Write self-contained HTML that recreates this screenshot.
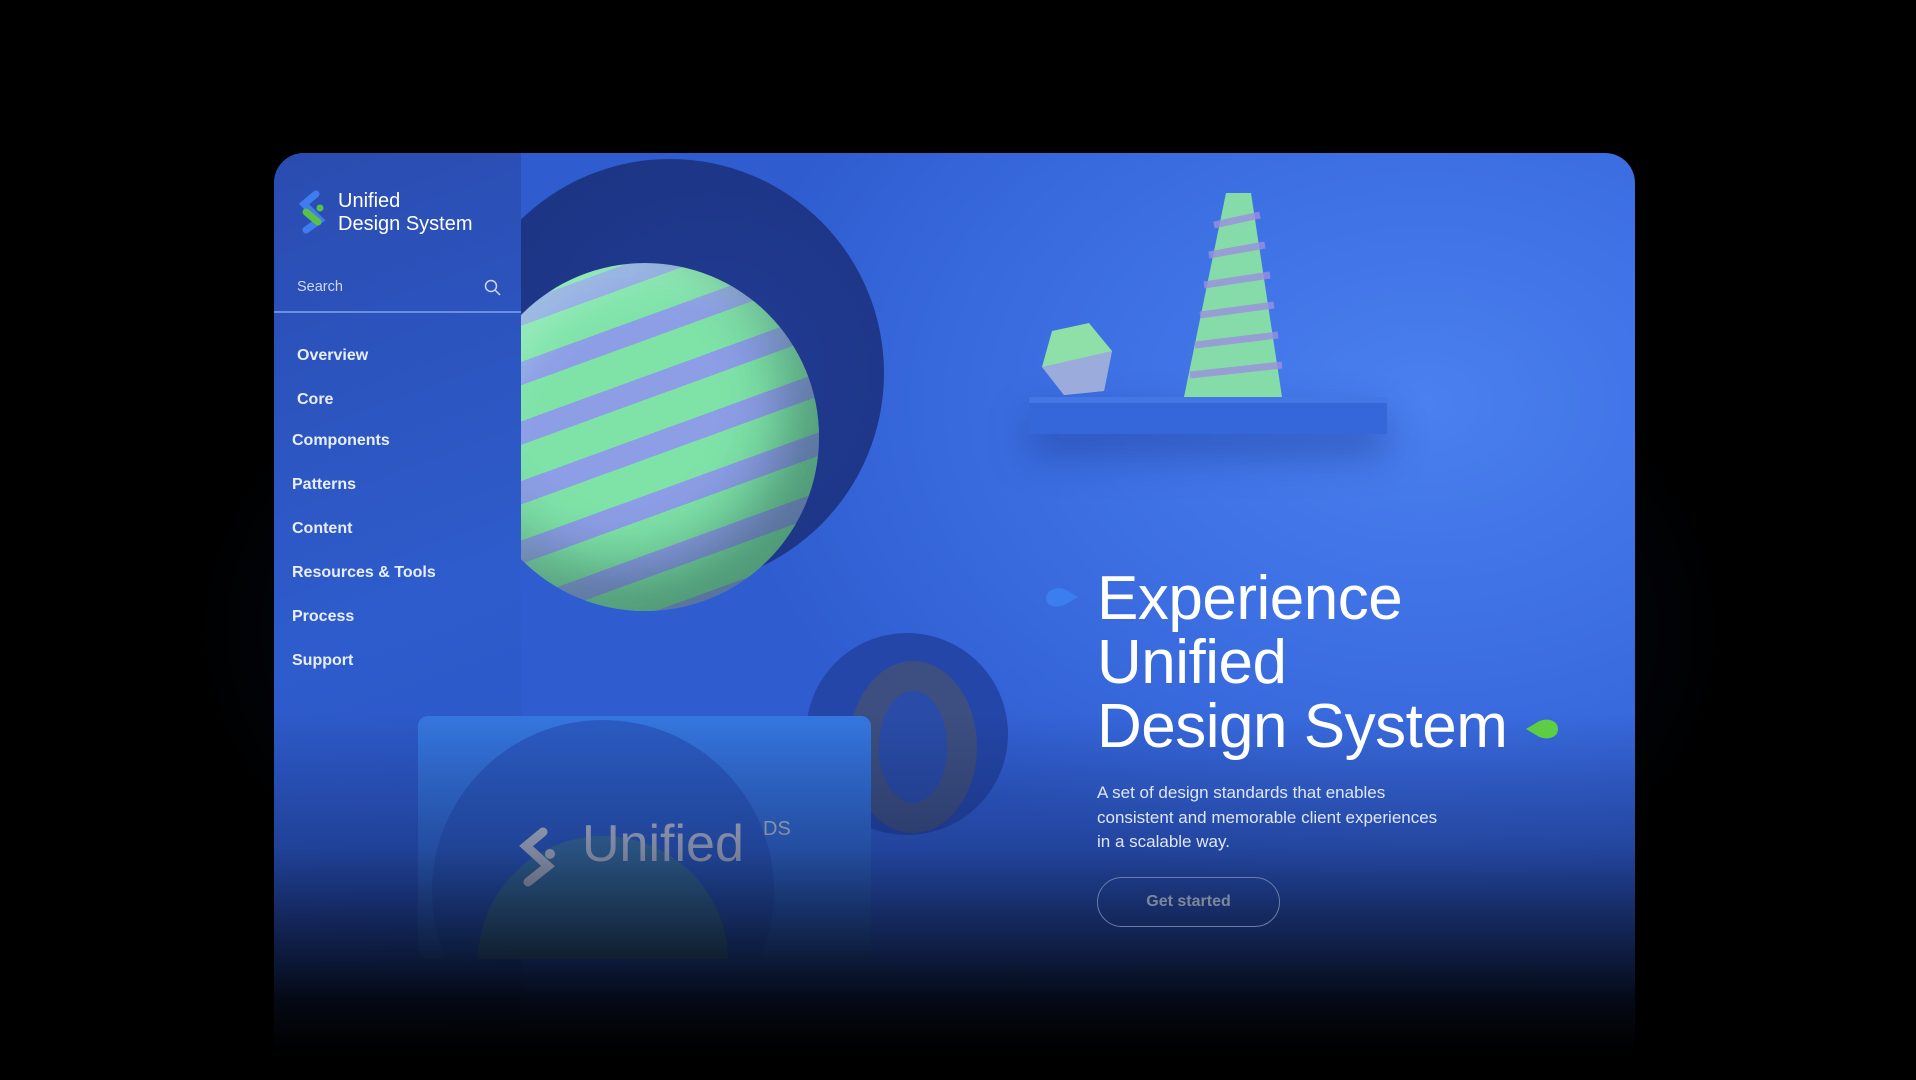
<!DOCTYPE html>
<html><head><meta charset="utf-8"><style>
*{margin:0;padding:0;box-sizing:border-box}
body{width:1916px;height:1009px;background:#000;overflow:hidden;position:relative;font-family:"Liberation Sans",sans-serif}
.glow{position:absolute;left:120px;top:180px;width:1680px;height:900px;background:radial-gradient(ellipse at center,rgba(30,50,120,.55),rgba(0,0,0,0) 65%)}
.card{position:absolute;left:274px;top:153px;width:1361px;height:900px;border-radius:30px 30px 0 0;overflow:hidden;background:radial-gradient(ellipse 700px 500px at 1150px 250px,#4a80f0,#3a6ce0 60%,#2f5dd0)}
.side{position:absolute;left:0;top:0;width:247px;height:900px;background:linear-gradient(160deg,#2a4cb0,#2e5ccc 50%,#2a54c2)}
.fade{position:absolute;left:0;right:0;top:560px;height:340px;background:linear-gradient(to bottom,rgba(10,20,60,0),rgba(15,30,80,.4) 40%,rgba(0,0,0,.9) 85%,#000)}
.nav{position:absolute;color:#e8eefc;font-size:16px;font-weight:bold}
.abs{position:absolute}
</style></head><body>
<div class="glow"></div>
<div class="card">
  <div class="abs" style="left:182px;top:6px;width:428px;height:428px;border-radius:50%;background:radial-gradient(circle at 60% 50%,#213c94,#1d3585 70%,#203b90)"></div>
  <div class="abs" style="left:197px;top:110px;width:348px;height:348px;border-radius:50%;background:repeating-linear-gradient(-20deg,#7fe3a8 0 34px,#8d9ee6 34px 56px),#7fe0a0;box-shadow:inset -30px -40px 60px rgba(20,60,60,.45),inset 20px 20px 40px rgba(200,255,230,.35)"></div>
  <div class="side"></div>
  <div class="abs" style="left:755px;top:244px;width:358px;height:37px;background:#3567da;box-shadow:0 20px 40px rgba(20,40,120,.4)"></div>
  <div class="abs" style="left:755px;top:244px;width:358px;height:6px;background:#4377e6"></div>
  <svg class="abs" style="left:760px;top:30px" width="340" height="220"><polygon points="192,10 217,10 248,214 150,214" fill="#86dca8"/><g stroke="#9b8fe0" stroke-width="7" opacity=".8"><line x1="180" y1="42" x2="226" y2="32"/><line x1="175" y1="72" x2="231" y2="62"/><line x1="170" y1="102" x2="236" y2="92"/><line x1="166" y1="132" x2="240" y2="122"/><line x1="161" y1="162" x2="244" y2="152"/><line x1="156" y1="192" x2="248" y2="182"/></g><polygon points="18,148 55,140 78,168 70,208 30,212 8,184" fill="#8ee0a8"/><polygon points="8,184 78,168 70,208 30,212" fill="#9f9ee8" opacity=".8"/></svg>
  <div class="abs" style="left:532px;top:480px;width:202px;height:202px;border-radius:50%;background:#2446a8"></div>
  <div class="abs" style="left:575px;top:508px;width:128px;height:172px;border-radius:50%;border:30px solid #3d4f80;background:#2a4ca8"></div>
  <div class="abs" style="left:144px;top:563px;width:453px;height:243px;border-radius:10px;overflow:hidden;background:linear-gradient(#3577e0,#2f64cc)">
    <div class="abs" style="left:14px;top:4px;width:342px;height:342px;border-radius:50%;background:#2b5cc4"></div>
    <div class="abs" style="left:60px;top:120px;width:250px;height:250px;border-radius:50%;background:#3f7a98;opacity:.8"></div>
    <svg class="abs" style="left:100px;top:110px" width="40" height="62"><g stroke="#c8cdd8" stroke-width="9" stroke-linecap="round" fill="none"><path d="M25 6 L8 20 L30 40 L10 56"/></g><circle cx="32" cy="28" r="5" fill="#c8cdd8"/></svg>
    <div class="abs" style="left:164px;top:98px;font-size:52px;color:#c4c8d4">Unified</div>
    <div class="abs" style="left:345px;top:102px;font-size:20px;color:#c4c8d4">DS</div>
  </div>
  <div class="fade"></div>
  <svg class="abs" style="left:24px;top:37px" width="28" height="44"><g stroke-linecap="round" stroke-width="7" fill="none"><path d="M18 4 L6 14 L14 22" stroke="#3f7cf0"/><path d="M14 22 L22 30 L8 40" stroke="#3f7cf0"/><path d="M8 22 L20 32" stroke="#58c248"/></g><circle cx="22" cy="18" r="3.5" fill="#58c248"/></svg>
  <div class="abs" style="left:64px;top:37px;color:#fff;font-size:20px;line-height:23px">Unified<br>Design System</div>
  <div class="abs" style="left:23px;top:126px;color:#cfd8f3;font-size:14.5px">Search</div>
  <svg class="abs" style="left:210px;top:126px" width="18" height="18"><circle cx="7" cy="7" r="5.5" stroke="#cfd8f3" stroke-width="1.5" fill="none"/><line x1="11" y1="11" x2="16" y2="16" stroke="#cfd8f3" stroke-width="1.5"/></svg>
  <div class="abs" style="left:0;top:158px;width:247px;height:2px;background:#6b8fe0"></div>
  <div class="nav" style="left:23px;top:194px">Overview</div>
  <div class="nav" style="left:23px;top:238px">Core</div>
  <div class="nav" style="left:18px;top:279px">Components</div>
  <div class="nav" style="left:18px;top:323px">Patterns</div>
  <div class="nav" style="left:18px;top:367px">Content</div>
  <div class="nav" style="left:18px;top:411px">Resources &amp; Tools</div>
  <div class="nav" style="left:18px;top:455px">Process</div>
  <div class="nav" style="left:18px;top:499px">Support</div>
  <svg class="abs" style="left:768px;top:430px" width="40" height="30"><path d="M4 16 C4 6 18 2 26 8 L36 14 L26 20 C18 26 4 24 4 16Z" fill="#3a7ef0"/></svg>
  <svg class="abs" style="left:1248px;top:562px" width="40" height="30"><path d="M36 14 C36 4 22 2 14 8 L4 14 L14 20 C22 26 36 24 36 14Z" fill="#5ccd45"/></svg>
  <div class="abs" style="left:823px;top:414px;color:#fff;font-size:62px;line-height:64px;letter-spacing:-.5px">Experience<br>Unified<br>Design System</div>
  <div class="abs" style="left:823px;top:628px;color:#dfe6f8;font-size:17px;line-height:24.5px">A set of design standards that enables<br>consistent and memorable client experiences<br>in a scalable way.</div>
  <div class="abs" style="left:823px;top:724px;width:183px;height:50px;border:1.5px solid #6a7ca8;border-radius:25px;color:#7d879c;font-size:16px;font-weight:bold;text-align:center;line-height:47px">Get started</div>
</div>
</body></html>
